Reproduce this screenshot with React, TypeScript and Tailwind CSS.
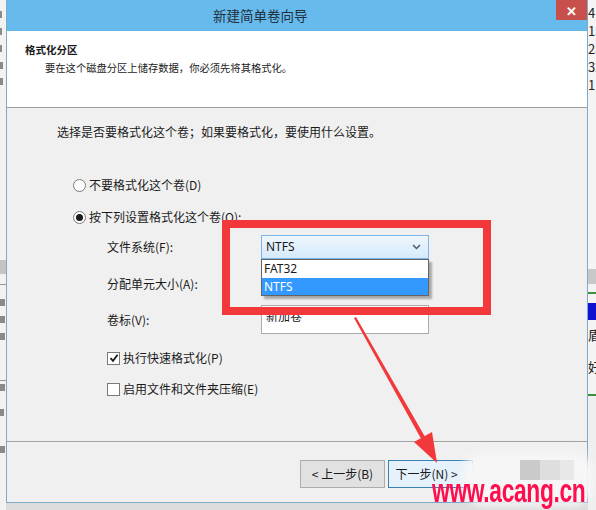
import React from "react";

const CheckIcon = () => (
  <svg width="10" height="10" viewBox="0 0 10 10" className="block">
    <path d="M1.5 5.2 L4 7.8 L8.6 1.8" fill="none" stroke="#1a1a1a" strokeWidth="1.8" />
  </svg>
);

const Radio = ({ checked, label }: { checked?: boolean; label: string }) => (
  <div className="flex h-4 items-center gap-[3px] pl-4">
    <span className="flex h-[13px] w-[13px] items-center justify-center rounded-full border border-[#7a7a7a] bg-white">
      {checked && <span className="h-[7px] w-[7px] rounded-full bg-[#1a1a1a]" />}
    </span>
    <span>{label}</span>
  </div>
);

const Check = ({ checked, label }: { checked?: boolean; label: string }) => (
  <div className="flex h-4 items-center gap-[3px] pl-[50px]">
    <span className="flex h-[13px] w-[13px] items-center justify-center border border-[#7a7a7a] bg-white">
      {checked && <CheckIcon />}
    </span>
    <span>{label}</span>
  </div>
);

const Field = ({ label, children, h, mt }: { label: string; children?: React.ReactNode; h: string; mt: string }) => (
  <div className={`flex items-center pl-[50px] ${h} ${mt}`}>
    <span className="w-[154px]">{label}</span>
    {children}
  </div>
);

const RightStrip = () => (
  <div className="flex w-[8px] flex-col overflow-hidden bg-[#f4f4f4] text-[13px] leading-[18px] text-[#222]">
    <div className="h-[4px]" />
    <div className="whitespace-nowrap">4</div>
    <div className="whitespace-nowrap">15</div>
    <div className="whitespace-nowrap">25</div>
    <div className="whitespace-nowrap">32</div>
    <div className="whitespace-nowrap">1E</div>
    <div className="h-[175px]" />
    <div className="h-[15px] bg-[#c8c8c8]" />
    <div className="h-[8px]" />
    <div className="h-[2px] bg-[#3f8f3f]" />
    <div className="h-[9px]" />
    <div className="h-[17px] bg-[#1010d0]" />
    <div className="h-[6px]" />
    <div className="whitespace-nowrap">盾</div>
    <div className="h-[14px]" />
    <div className="whitespace-nowrap">好</div>
    <div className="h-[18px]" />
    <div className="h-[2px] bg-[#3f8f3f]" />
    <div className="flex-1 bg-[#efefef]" />
  </div>
);

// background window peeking out on the left: only slivers of its text remain
const Mark = ({ mt, w = "w-[3px]" }: { mt: string; w?: string }) => (
  <div className={`h-[7px] ${w} ${mt} bg-[#8a8a8a]`} />
);

const LeftStrip = () => (
  <div className="flex w-[6px] flex-col overflow-hidden bg-[#f2f2f2]">
    <Mark mt="mt-[11px]" w="w-[2px]" />
    <Mark mt="mt-[10px]" w="w-[2px]" />
    <Mark mt="mt-[10px]" w="w-[2px]" />
    <Mark mt="mt-[10px]" />
    <Mark mt="mt-[9px]" />
    <div className="mt-[175px] h-[14px] bg-[#c4c4c4]" />
    <div className="mt-[10px] h-[1px] bg-[#9a9a9a]" />
    <Mark mt="mt-[14px]" w="w-[5px]" />
    <Mark mt="mt-[10px]" w="w-[5px]" />
    <Mark mt="mt-[10px]" w="w-[5px]" />
    <div className="mt-[40px] h-[1px] bg-[#9a9a9a]" />
    <Mark mt="mt-[3px]" w="w-[5px]" />
    <Mark mt="mt-[18px]" w="w-[4px]" />
    <Mark mt="mt-[30px]" w="w-[5px]" />
    <div className="flex-1" />
  </div>
);

export default function App() {
  return (
    <div className="relative flex h-[510px] w-[596px] overflow-hidden bg-[#dcdcdc] font-['Noto_Sans_CJK_SC',sans-serif] text-[12px] text-[#1a1a1a]">
      <LeftStrip />

      <div className="flex h-[503px] w-[582px] flex-col border-x border-b border-[#7fa9c9] bg-[#f0f0f0]">
        {/* title bar */}
        <div className="flex h-[31px] items-start bg-[#67bbec]">
          <div className="flex h-[30px] flex-1 items-center pl-[206px] text-[13.5px] text-[#22313f]">新建简单卷向导</div>
          <div className="flex h-[20px] w-[31px] items-center justify-center bg-[#c8504c] text-[13px] font-bold leading-none text-white">✕</div>
        </div>

        {/* header */}
        <div className="flex h-[77px] flex-col border-b border-[#a0a0a0] bg-white pt-[11px]">
          <div className="pl-[18px] text-[10.5px] font-bold leading-4">格式化分区</div>
          <div className="mt-[2px] pl-[38px] text-[10.3px] leading-4">要在这个磁盘分区上储存数据，你必须先将其格式化。</div>
        </div>

        {/* body */}
        <div className="flex flex-1 flex-col pl-[50px] pt-[16px] leading-4">
          <div className="h-4">选择是否要格式化这个卷；如果要格式化，要使用什么设置。</div>
          <div className="mt-[37px]">
            <Radio label="不要格式化这个卷(D)" />
          </div>
          <div className="mt-[16px]">
            <Radio checked label="按下列设置格式化这个卷(O):" />
          </div>
          <Field label="文件系统(F):" h="h-[24px]" mt="mt-[10px]">
            <div className="flex h-[24px] w-[168px] items-center justify-between border border-[#7eb4ea] bg-gradient-to-b from-[#eef6fd] to-[#d6eafb] pl-[4px] pr-[7px] font-['Noto_Sans',sans-serif]">
              <span>NTFS</span>
              <svg width="9" height="6" viewBox="0 0 9 6">
                <path d="M1 1 L4.5 4.5 L8 1" fill="none" stroke="#4a5a6a" strokeWidth="1.5" />
              </svg>
            </div>
          </Field>
          <Field label="分配单元大小(A):" h="h-[25px]" mt="mt-[12px]" />
          <Field label="卷标(V):" h="h-[29px]" mt="mt-[9px]">
            <div className="flex h-[29px] w-[168px] items-start border border-[#ababab] bg-white pl-[4px] pt-[2px]">新加卷</div>
          </Field>
          <div className="mt-[16px]">
            <Check checked label="执行快速格式化(P)" />
          </div>
          <div className="mt-[15px]">
            <Check label="启用文件和文件夹压缩(E)" />
          </div>
        </div>

        {/* footer */}
        <div className="flex h-[61px] flex-col border-t border-[#a0a0a0]">
          <div className="flex justify-end gap-[3px] pr-[19px] pt-[18px]">
            <button className="h-[28px] w-[85px] border border-[#adadad] bg-[#e1e1e1]">&lt; 上一步(B)</button>
            <button className="h-[28px] w-[85px] border border-[#3c7fb1] bg-[#e5f1fb] pr-[8px]">下一步(N) &gt;</button>
            <button className="ml-[7px] h-[28px] w-[85px] border border-[#adadad] bg-[#e1e1e1]" />
          </div>
        </div>
      </div>

      <RightStrip />

      {/* open dropdown list */}
      <div className="absolute left-[261px] top-[259px] flex w-[168px] flex-col border border-[#646464] bg-white font-['Noto_Sans',sans-serif] leading-[17px] shadow-[3px_3px_2px_rgba(0,0,0,0.3)]">
        <div className="h-[18px] pl-[2px]">FAT32</div>
        <div className="h-[17px] bg-[#3399ff] pl-[2px] text-white">NTFS</div>
      </div>

      {/* red annotation rectangle */}
      <div className="absolute left-[222px] top-[220px] h-[95px] w-[269px] border-[8px] border-[#f2383a]" />

      {/* red arrow */}
      <svg className="absolute left-0 top-0" width="596" height="510" viewBox="0 0 596 510">
        <polygon points="354,318 356,317 428,442 424,444" fill="#f2383a" />
        <polygon points="437,463 414,442 432,432" fill="#f2383a" />
      </svg>

      {/* mosaic / blur over the cancel button */}
      <div className="absolute left-[462px] top-[452px] h-[54px] w-[132px] rounded-[22px] bg-[#f6f6f6] blur-[4px]" />
      <div className="absolute left-[520px] top-[460px] h-[20px] w-[20px] bg-[#cacaca]" />
      <div className="absolute left-[540px] top-[460px] h-[20px] w-[20px] bg-[#dedede]" />
      <div className="absolute left-[560px] top-[460px] h-[20px] w-[14px] bg-[#e8e8e8]" />

      {/* watermark */}
      <div className="absolute left-[432px] top-[470px] origin-left scale-x-[0.67] whitespace-nowrap font-['Liberation_Sans',sans-serif] text-[34px] font-bold leading-[40px] tracking-[-0.5px] text-[#ff0d4d]">
        www.acang.cn
      </div>
    </div>
  );
}
